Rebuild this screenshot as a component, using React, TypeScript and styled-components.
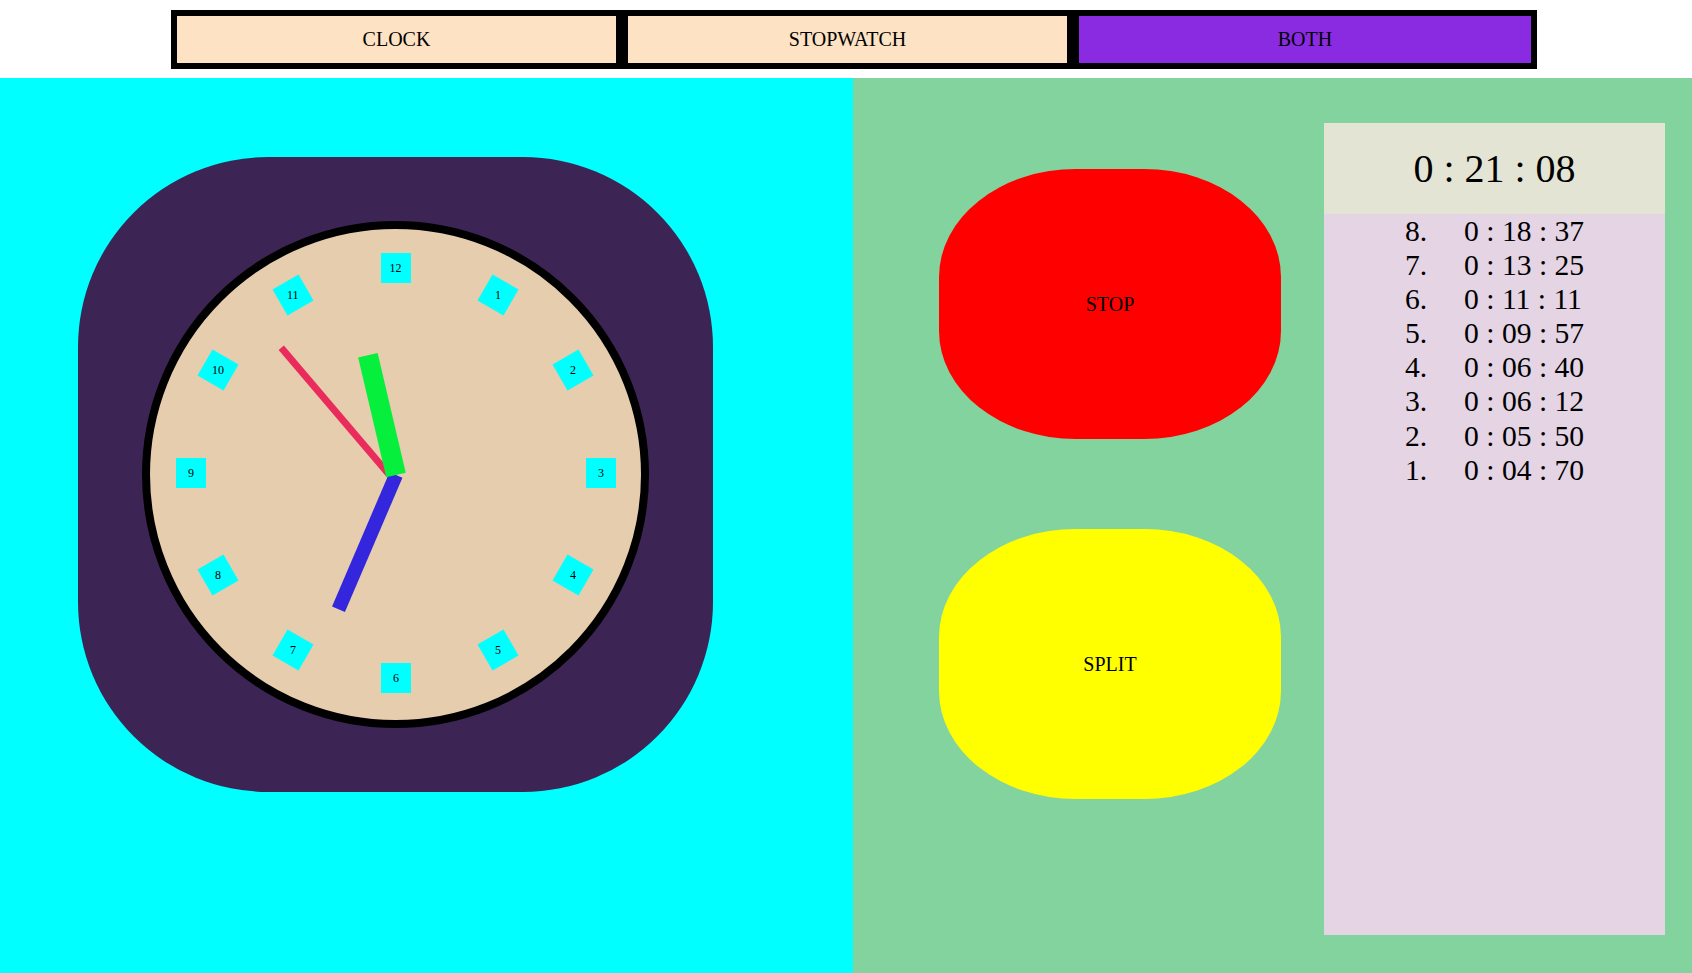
import React from "react";
import styled, { createGlobalStyle } from "styled-components";

const GlobalStyle = createGlobalStyle`
  html, body {
    margin: 0;
    padding: 0;
    background: #ffffff;
    overflow: hidden;
    font-family: "Liberation Serif", "Times New Roman", serif;
    color: #000;
  }
  * { box-sizing: border-box; }
`;

const Page = styled.div`
  width: 1692px;
  height: 973px;
  display: flex;
  flex-direction: column;
`;

const TopBar = styled.header`
  padding: 10px 0 9px 171px;
  background: #fff;
`;

const Nav = styled.nav`
  width: 1366px;
  border: 6px solid #000;
  background: #000;
  display: grid;
  grid-template-columns: 439px 439px 1fr;
  gap: 12px;
`;

const NavButton = styled.button<{ $active?: boolean }>`
  height: 47px;
  border: none;
  padding: 0;
  margin: 0;
  background: ${(p) => (p.$active ? "#8a2be2" : "#fde2c4")};
  font-family: "Liberation Serif", "Times New Roman", serif;
  font-size: 20px;
  color: #000;
  display: flex;
  align-items: center;
  justify-content: center;
  cursor: pointer;
`;

const Main = styled.main`
  flex: 1;
  display: flex;
  min-height: 0;
`;

const ClockPane = styled.section`
  width: 853px;
  background: #00ffff;
  padding: 79px 0 0 78px;
`;

const ClockCase = styled.div`
  width: 635px;
  height: 635px;
  background: #3c2554;
  border-radius: 190px;
  display: flex;
  align-items: center;
  justify-content: center;
`;

const Face = styled.div`
  position: relative;
  width: 507px;
  height: 507px;
  border: 8px solid #000;
  border-radius: 50%;
  background: #e5cdae;
`;

const NumberBox = styled.div<{ $x: number; $y: number; $angle: number }>`
  position: absolute;
  width: 30px;
  height: 30px;
  left: calc(50% - 15px + ${(p) => p.$x}px);
  top: calc(50% - 17px + ${(p) => p.$y}px);
  transform: rotate(${(p) => p.$angle}deg);
  background: #00ffff;
  display: flex;
  align-items: center;
  justify-content: center;
  font-size: 12px;
`;

const NumberLabel = styled.span<{ $angle: number }>`
  display: block;
  line-height: 1;
  transform: rotate(${(p) => -p.$angle}deg);
`;

const Hand = styled.div<{
  $w: number;
  $len: number;
  $angle: number;
  $color: string;
  $dx?: number;
}>`
  position: absolute;
  bottom: 50%;
  left: calc(50% - ${(p) => p.$w / 2}px + ${(p) => p.$dx ?? 0}px);
  width: ${(p) => p.$w}px;
  height: ${(p) => p.$len}px;
  background: ${(p) => p.$color};
  transform-origin: 50% 100%;
  transform: rotate(${(p) => p.$angle}deg);
`;

const StopwatchPane = styled.section`
  flex: 1;
  background: #83d39e;
  display: flex;
  align-items: flex-start;
  padding: 45px 0 0 86px;
  gap: 43px;
`;

const Controls = styled.div`
  display: flex;
  flex-direction: column;
  gap: 90px;
  padding-top: 46px;
`;

const BigButton = styled.button<{ $color: string }>`
  width: 342px;
  height: 270px;
  border: none;
  padding: 0;
  border-radius: 40%;
  background: ${(p) => p.$color};
  font-family: "Liberation Serif", "Times New Roman", serif;
  font-size: 20px;
  color: #000;
  cursor: pointer;
`;

const Panel = styled.div`
  width: 341px;
  height: 812px;
  display: flex;
  flex-direction: column;
`;

const PanelHeader = styled.div`
  height: 91px;
  background: #e4e4d4;
  display: flex;
  align-items: center;
  justify-content: center;
  font-size: 40px;
`;

const SplitList = styled.ol`
  flex: 1;
  margin: 0;
  padding: 0;
  list-style: none;
  background: #e4d4e4;
  display: grid;
  grid-template-columns: max-content max-content;
  grid-auto-rows: 34.1px;
  align-content: start;
  justify-content: center;
  column-gap: 37px;
  font-size: 29.6px;
  line-height: 34.1px;
`;

const SplitRow = styled.li`
  display: contents;
`;

const SplitCell = styled.span`
  white-space: pre;
`;

const splits = [
  "0 : 18 : 37",
  "0 : 13 : 25",
  "0 : 11 : 11",
  "0 : 09 : 57",
  "0 : 06 : 40",
  "0 : 06 : 12",
  "0 : 05 : 50",
  "0 : 04 : 70",
];

const hours = Array.from({ length: 12 }, (_, i) => i + 1);

export default function App() {
  return (
    <Page>
      <GlobalStyle />
      <TopBar>
        <Nav>
          <NavButton>CLOCK</NavButton>
          <NavButton>STOPWATCH</NavButton>
          <NavButton $active>BOTH</NavButton>
        </Nav>
      </TopBar>
      <Main>
        <ClockPane>
          <ClockCase>
            <Face>
              {hours.map((h) => {
                const a = h * 30;
                const rad = (a * Math.PI) / 180;
                const x = 205 * Math.sin(rad);
                const y = -205 * Math.cos(rad);
                return (
                  <NumberBox key={h} $x={x} $y={y} $angle={a}>
                    <NumberLabel $angle={a}>{h}</NumberLabel>
                  </NumberBox>
                );
              })}
              <Hand $w={7} $len={167} $angle={-40.4} $color="#ea2c5c" $dx={-6.5} />
              <Hand $w={14} $len={146} $angle={203.2} $color="#3326dc" />
              <Hand $w={20} $len={123} $angle={-13.2} $color="#06ef3c" />
            </Face>
          </ClockCase>
        </ClockPane>
        <StopwatchPane>
          <Controls>
            <BigButton $color="#ff0000">STOP</BigButton>
            <BigButton $color="#ffff00">SPLIT</BigButton>
          </Controls>
          <Panel>
            <PanelHeader>0 : 21 : 08</PanelHeader>
            <SplitList>
              {splits.map((s, i) => (
                <SplitRow key={i}>
                  <SplitCell>{splits.length - i}.</SplitCell>
                  <SplitCell>{s}</SplitCell>
                </SplitRow>
              ))}
            </SplitList>
          </Panel>
        </StopwatchPane>
      </Main>
    </Page>
  );
}
